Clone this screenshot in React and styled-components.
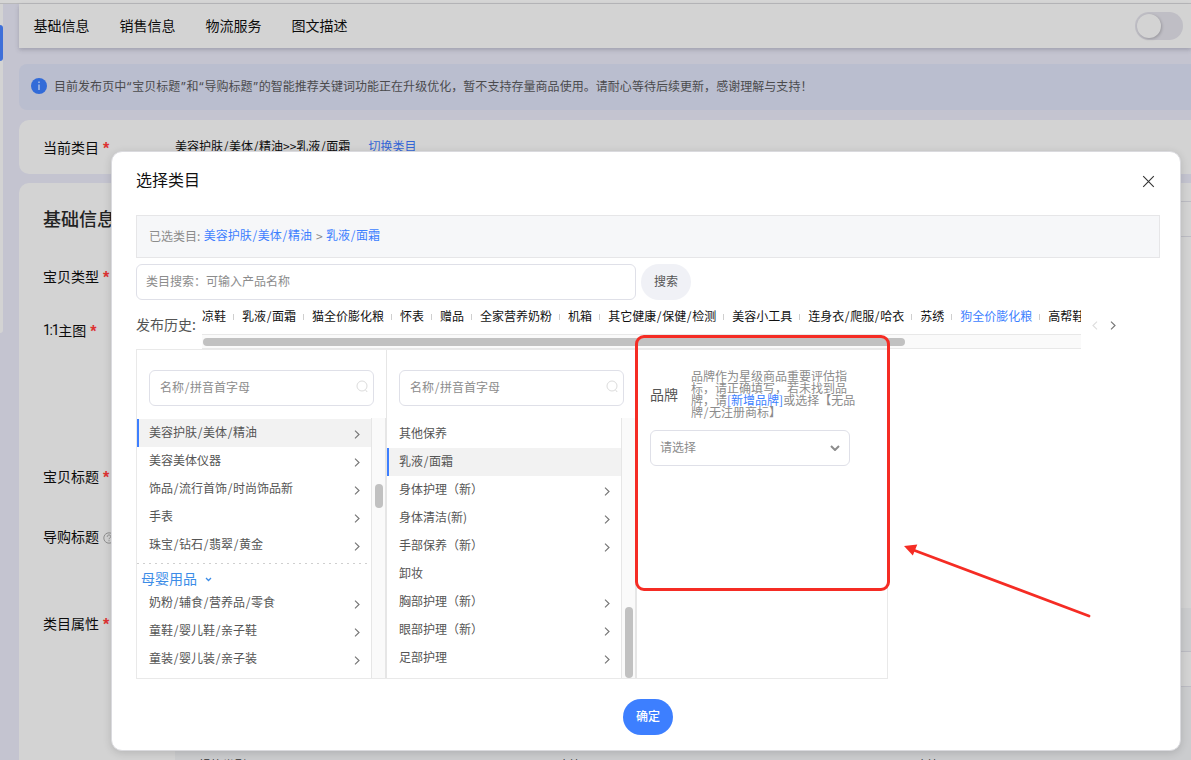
import { Fragment } from 'react';
import styled, { createGlobalStyle, css } from 'styled-components';

const color = {
  primary: '#3d7fff',
  group: '#3c8ce7',
  line: '#e6e6e8',
  field: '#dfe0e8',
  text: '#555555',
  hint: '#8c8c8c',
  page: '#c4c4d0',
  card: '#d3d3d3',
  mark: '#f52c24',
};

const GlobalStyle = createGlobalStyle`
  * {
    box-sizing: border-box;
  }
  body {
    margin: 0;
    overflow: hidden;
    font-family: 'Noto Sans CJK SC', sans-serif;
    font-size: 12px;
    line-height: 20px;
    white-space: nowrap;
  }
`;

// ---------- page behind the dialog ----------
const Page = styled.div`
  position: relative;
  width: 1191px;
  height: 760px;
  overflow: hidden;
  background: ${color.page};
`;
const TopStrip = styled.div`
  height: 4px;
  background: #d5d5d5;
  border-bottom: 1px solid #b8b8ba;
`;
const Columns = styled.div`
  display: flex;
  height: 756px;
`;
const Rail = styled.div`
  width: 3px;
  height: 329px;
  padding-top: 21px;
  margin-right: 16px;
  background: ${color.card};
  border-radius: 0 0 3px 0;
`;
const RailButton = styled.div`
  height: 36px;
  background: #3e6fd9;
  border-radius: 0 4px 4px 0;
`;
const Main = styled.div`
  flex: 1;
  display: flex;
  flex-direction: column;
`;
const Nav = styled.nav`
  display: flex;
  flex: none;
  gap: 30px;
  height: 44px;
  padding: 11px 8px 0 14.5px;
  background: ${color.card};
  box-shadow: 0 2px 4px rgba(60, 60, 80, 0.25);
  font-size: 14px;
  color: #0c0c0c;
`;
const Toggle = styled.div`
  width: 48px;
  height: 28px;
  padding: 2px;
  margin: -3px 0 0 auto;
  border-radius: 14px;
  background: #bfbec5;
  &::before {
    content: '';
    display: block;
    width: 24px;
    height: 24px;
    border-radius: 50%;
    background: #d3d3d3;
    box-shadow: 1px 1px 3px rgba(0, 0, 0, 0.2);
  }
`;
const Notice = styled.div`
  display: flex;
  flex: none;
  gap: 7px;
  height: 46px;
  margin-top: 16px;
  padding: 12px 0 0 12px;
  border-radius: 8px 0 0 8px;
  background: #babecf;
  color: #4b4b4d;
  letter-spacing: 0.04px;
  svg {
    margin-top: 2px;
  }
`;
const Card = styled.section`
  flex: none;
  height: ${({ $height }) => $height}px;
  margin-top: ${({ $gap }) => $gap}px;
  padding-left: 24px;
  border-radius: 10px 0 0 10px;
  background: ${color.card};
`;
const CardTitle = styled.div`
  display: flex;
  justify-content: space-between;
  height: 83px;
  h2 {
    margin: 23px 0 0;
    font-size: 18px;
    line-height: 24px;
    font-weight: 500;
    color: #222;
  }
`;
const TitleField = styled.div`
  width: 400px;
  height: 36px;
  margin-top: 18px;
  border: 1px solid #bcbcc3;
  border-right: none;
`;
const FormRow = styled.div`
  display: flex;
  height: ${({ $height }) => $height}px;
  padding-top: ${({ $top = 0 }) => $top}px;
`;
const FormLabel = styled.div`
  display: flex;
  width: 132px;
  font-size: 14px;
  color: #0c0c0c;
`;
const Required = styled.span`
  margin-left: 4px;
  color: #dd3232;
  font-family: 'Liberation Sans', sans-serif;
  font-size: 16px;
  font-weight: 700;
  line-height: 23px;
`;
const Ratio = styled.span`
  font-family: Roboto, sans-serif;
  letter-spacing: -1.3px;
`;
const CurrentPath = styled.span`
  margin-top: -1px;
  color: #0c0c0c;
`;
const SwitchLink = styled.a`
  margin: -1px 0 0 18px;
  color: #3366d6;
`;
const Attributes = styled.div`
  flex: 1;
  height: 160px;
  margin-top: -5px;
  padding-top: 43px;
  background: #cbccce;
`;
const AttributeField = styled.div`
  height: 36px;
  background: ${color.card};
  border: 1px solid #bcbcc3;
  border-width: 1px 0;
`;
const AttributeNames = styled.div`
  display: grid;
  grid-template-columns: 358px 358px 1fr;
  padding: 68px 0 0 14px;
  color: #333;
`;
const AttributeName = styled.div`
  display: flex;
  gap: 4px;
  i {
    color: #d33;
    font-style: normal;
  }
`;

// ---------- dialog ----------
const Dialog = styled.div`
  position: absolute;
  left: 111px;
  top: 151px;
  width: 1070px;
  height: 600px;
  padding: 0 20px 0 24px;
  border: 1px solid #dadade;
  border-radius: 11px;
  background: #fff;
  box-shadow: 0 2px 8px rgba(0, 0, 0, 0.14);
  display: flex;
  flex-direction: column;
`;
const DialogHead = styled.header`
  display: flex;
  justify-content: space-between;
  height: 63px;
  padding-top: 15px;
  font-size: 16px;
  line-height: 24px;
  color: #111;
  svg {
    margin: 8px 5px 0 0;
  }
`;
const Selected = styled.div`
  height: 43px;
  padding-left: 12px;
  border: 1px solid ${color.line};
  background: #f6f7f9;
  color: ${color.hint};
  line-height: 40px;
  display: flex;
  a {
    color: ${color.primary};
    margin: -1px 4px 0 3.5px;
  }
`;
const SearchBar = styled.div`
  display: flex;
  gap: 5px;
  margin-top: 6px;
`;
const Field = styled.div`
  display: flex;
  align-items: center;
  justify-content: space-between;
  width: ${({ $width }) => $width}px;
  height: 36px;
  padding: 0 ${({ $right = 9 }) => $right}px 2px ${({ $left = 9 }) => $left}px;
  border: 1px solid ${color.field};
  border-radius: 6px;
  color: ${color.hint};
`;
const Button = styled.button`
  width: 50px;
  height: 36px;
  padding: 0 0 2px;
  border: none;
  border-radius: 18px;
  font: inherit;
  background: #f0f1f6;
  color: ${color.text};
  ${({ $primary }) =>
    $primary &&
    css`
      background: ${color.primary};
      color: #fff;
      font-weight: 500;
    `}
`;
const History = styled.div`
  display: flex;
  height: 49px;
`;
const HistoryLabel = styled.div`
  width: 66px;
  padding-top: 14px;
  font-size: 14px;
  color: ${color.text};
`;
const HistoryScroll = styled.div`
  width: 879px;
  overflow: hidden;
`;
const HistoryItems = styled.div`
  display: flex;
  align-items: center;
  height: 34px;
  padding-bottom: 3px;
`;
const HistoryItem = styled.span`
  display: flex;
  flex: none;
  align-items: center;
  color: ${({ $active }) => ($active ? color.primary : '#111')};
  &:not(:first-child)::before {
    content: '';
    width: 1px;
    height: 6px;
    margin: 2px 8px 0 7px;
    background: #cfcfcf;
  }
`;
const TrackX = styled.div`
  height: 15px;
  padding: 3px 1px;
  border: 1px solid #e8e8e8;
  border-width: 1px 0;
  background: #fafafa;
  &::before {
    content: '';
    display: block;
    width: 702px;
    height: 8px;
    border-radius: 4px;
    background: #c1c1c1;
  }
`;
const HistoryArrows = styled.div`
  display: flex;
  gap: 12px;
  padding: 21px 0 0 11px;
`;
const Panels = styled.div`
  display: flex;
  width: 752px;
  height: 330px;
  border: 1px solid #e9e9e9;
`;
const Panel = styled.div`
  display: flex;
  flex-direction: column;
  width: 250px;
  padding-top: 20px;
  &:not(:last-child) {
    border-right: 1px solid #e6e6e6;
  }
  & > ${Field} {
    flex: none;
    margin-left: 12px;
  }
  &:last-child > ${Field} {
    margin-left: 13px;
  }
`;
const ListArea = styled.div`
  display: flex;
  height: 260px;
  margin-top: 12px;
`;
const List = styled.div`
  flex: 1;
  padding-top: ${({ $top }) => $top}px;
`;
const Item = styled.div`
  display: flex;
  justify-content: space-between;
  height: 28px;
  padding: 3px 11px 0 10px;
  border-left: 2px solid transparent;
  color: ${color.text};
  ${({ $active }) =>
    $active &&
    css`
      background: #f2f2f2;
      border-color: ${color.primary};
    `}
  svg {
    margin-top: 8px;
  }
`;
const Group = styled.div`
  display: flex;
  align-items: center;
  gap: 8px;
  height: 26px;
  margin-top: 4px;
  padding: 3px 0 0 4px;
  background: repeating-linear-gradient(90deg, #cfcfcf 0 2px, transparent 2px 6px) 0 0 / 100% 1px no-repeat;
  font-size: 14px;
  color: ${color.group};
  svg {
    margin-top: 3px;
  }
`;
const TrackY = styled.div`
  width: 15px;
  padding: ${({ $offset }) => $offset}px 2px 0 3px;
  border: 1px solid #e6e6e6;
  border-width: 0 1px;
  background: #fafafa;
  &::before {
    content: '';
    display: block;
    width: 8px;
    height: ${({ $size }) => $size}px;
    border-radius: 4px;
    background: #c1c1c1;
  }
`;
const Brand = styled.div`
  display: flex;
  align-items: center;
  gap: 13px;
  height: 48px;
  margin-bottom: 12px;
  padding: 0 0 1px 13px;
  color: ${color.text};
  font-size: 14px;
`;
const BrandTip = styled.p`
  margin: 0;
  font-size: 12px;
  line-height: 12px;
  color: ${color.hint};
  a {
    color: ${color.primary};
  }
`;
const Footer = styled.footer`
  display: flex;
  justify-content: center;
  padding-top: 20px;
`;

// ---------- annotation over the dialog ----------
const Frame = styled.div`
  position: absolute;
  left: 635px;
  top: 335px;
  width: 255px;
  height: 256px;
  border: 3px solid ${color.mark};
  border-radius: 9px;
`;
const Arrow = styled.svg`
  position: absolute;
  left: 900px;
  top: 540px;
`;

const Half = styled.span`
  display: inline-block;
  width: 0.5em;
  text-align: center;
  font-family: ${({ $latin }) => ($latin ? "'Noto Sans'" : 'inherit')}, sans-serif;
  line-height: 1;
`;

// slashes and curly quotes take half a character
const Text = ({ children }) =>
  children.split(/([/“”])/).map((part, i) =>
    /^[/“”]$/.test(part) ? (
      <Half key={i} $latin={part !== '/'}>
        {part}
      </Half>
    ) : (
      <Fragment key={i}>{part}</Fragment>
    )
  );

const Chevron = ({ stroke = '#757575', left }) => (
  <svg width="6" height="9" viewBox="0 0 6 9" fill="none" stroke={stroke} strokeWidth="1.15">
    <path d={left ? 'M5 0.7 1 4.5 5 8.3' : 'M1 0.7 5 4.5 1 8.3'} />
  </svg>
);

const SearchIcon = () => (
  <svg width="13" height="14" viewBox="0 0 13 14" fill="none" stroke="#dcdcdc" strokeWidth="1">
    <circle cx="6" cy="6" r="5" />
    <path d="M9.4 9.8 11.2 12" />
  </svg>
);

const history = [
  '凉鞋',
  '乳液/面霜',
  '猫全价膨化粮',
  '怀表',
  '赠品',
  '全家营养奶粉',
  '机箱',
  '其它健康/保健/检测',
  '美容小工具',
  '连身衣/爬服/哈衣',
  '苏绣',
  '狗全价膨化粮',
  '高帮鞋',
];
const beauty = ['美容护肤/美体/精油', '美容美体仪器', '饰品/流行首饰/时尚饰品新', '手表', '珠宝/钻石/翡翠/黄金'];
const baby = ['奶粉/辅食/营养品/零食', '童鞋/婴儿鞋/亲子鞋', '童装/婴儿装/亲子装'];
const care = [
  { name: '其他保养', leaf: true },
  { name: '乳液/面霜', leaf: true },
  { name: '身体护理（新）' },
  { name: '身体清洁(新)' },
  { name: '手部保养（新）' },
  { name: '卸妆', leaf: true },
  { name: '胸部护理（新）' },
  { name: '眼部护理（新）' },
  { name: '足部护理' },
];

const Category = ({ name, leaf, active }) => (
  <Item $active={active}>
    <span>
      <Text>{name}</Text>
    </span>
    {!leaf && <Chevron />}
  </Item>
);

const PanelSearch = () => (
  <Field $width={225} $left={10} $right={4}>
    <span>
      <Text>名称/拼音首字母</Text>
    </span>
    <SearchIcon />
  </Field>
);

const Background = () => (
  <>
    <TopStrip />
    <Columns>
      <Rail>
        <RailButton />
      </Rail>
      <Main>
        <Nav>
          <span>基础信息</span>
          <span>销售信息</span>
          <span>物流服务</span>
          <span>图文描述</span>
          <Toggle />
        </Nav>
        <Notice>
          <svg width="16" height="16" viewBox="0 0 16 16">
            <circle cx="8" cy="8" r="8" fill="#326bd8" />
            <path d="M8 6.5V12M8 3.6V5" stroke="#d5dcec" strokeWidth="1.1" />
          </svg>
          <span>
            <Text>
              目前发布页中“宝贝标题”和“导购标题”的智能推荐关键词功能正在升级优化，暂不支持存量商品使用。请耐心等待后续更新，感谢理解与支持！
            </Text>
          </span>
        </Notice>
        <Card $gap={10} $height={54}>
          <FormRow $height={54} $top={17}>
            <FormLabel>
              当前类目<Required>*</Required>
            </FormLabel>
            <CurrentPath>
              <Text>美容护肤/美体/精油&gt;&gt;乳液/面霜</Text>
            </CurrentPath>
            <SwitchLink>切换类目</SwitchLink>
          </FormRow>
        </Card>
        <Card $gap={9} $height={590}>
          <CardTitle>
            <h2>基础信息</h2>
            <TitleField />
          </CardTitle>
          <FormRow $height={54}>
            <FormLabel>
              宝贝类型<Required>*</Required>
            </FormLabel>
          </FormRow>
          <FormRow $height={146}>
            <FormLabel>
              <Ratio>1:1</Ratio>主图<Required>*</Required>
            </FormLabel>
          </FormRow>
          <FormRow $height={60}>
            <FormLabel>
              宝贝标题<Required>*</Required>
            </FormLabel>
          </FormRow>
          <FormRow $height={87}>
            <FormLabel>
              导购标题
              <svg width="16" height="20" viewBox="0 0 16 20" fill="none" stroke="#8f8f8f">
                <circle cx="10" cy="12" r="5.2" />
                <path d="M8.2 10.8C8.2 8.3 11.8 8.5 11.8 10.6 11.8 11.9 10 11.9 10 13.2M10 14.2V15.2" />
              </svg>
            </FormLabel>
          </FormRow>
          <FormRow $height={160}>
            <FormLabel>
              类目属性<Required>*</Required>
            </FormLabel>
            <Attributes>
              <AttributeField />
              <AttributeNames>
                {['规格类型', '功效', '功效'].map((name, i) => (
                  <AttributeName key={i}>
                    <i>*</i>
                    {name}
                  </AttributeName>
                ))}
              </AttributeNames>
            </Attributes>
          </FormRow>
        </Card>
      </Main>
    </Columns>
  </>
);

const App = () => (
  <Page>
    <GlobalStyle />
    <Background />
    <Dialog>
      <DialogHead>
        <span>选择类目</span>
        <svg width="13" height="13" viewBox="0 0 13 13" stroke="#333" strokeWidth="1.1">
          <path d="M1.2 1.2 11.8 11.8M11.8 1.2 1.2 11.8" />
        </svg>
      </DialogHead>
      <Selected>
        <span>已选类目:</span>
        <a>
          <Text>美容护肤/美体/精油</Text>
        </a>
        &gt;
        <a>
          <Text>乳液/面霜</Text>
        </a>
      </Selected>
      <SearchBar>
        <Field $width={500}>类目搜索：可输入产品名称</Field>
        <Button>搜索</Button>
      </SearchBar>
      <History>
        <HistoryLabel>发布历史:</HistoryLabel>
        <HistoryScroll>
          <HistoryItems>
            {history.map((name) => (
              <HistoryItem key={name} $active={name === '狗全价膨化粮'}>
                <span>
                  <Text>{name}</Text>
                </span>
              </HistoryItem>
            ))}
          </HistoryItems>
          <TrackX />
        </HistoryScroll>
        <HistoryArrows>
          <Chevron left stroke="#dedede" />
          <Chevron />
        </HistoryArrows>
      </History>
      <Panels>
        <Panel>
          <PanelSearch />
          <ListArea>
            <List $top={1}>
              {beauty.map((name, i) => (
                <Category key={name} name={name} active={i === 0} />
              ))}
              <Group>
                母婴用品
                <svg width="7" height="5" viewBox="0 0 7 5" fill="none" stroke={color.group} strokeWidth="1.3">
                  <path d="M1 1 3.5 3.5 6 1" />
                </svg>
              </Group>
              {baby.map((name) => (
                <Category key={name} name={name} />
              ))}
            </List>
            <TrackY $offset={66} $size={24} />
          </ListArea>
        </Panel>
        <Panel>
          <PanelSearch />
          <ListArea>
            <List $top={2}>
              {care.map(({ name, leaf }, i) => (
                <Category key={name} name={name} leaf={leaf} active={i === 1} />
              ))}
            </List>
            <TrackY $offset={189} $size={71} />
          </ListArea>
        </Panel>
        <Panel>
          <Brand>
            品牌
            <BrandTip>
              品牌作为星级商品重要评估指
              <br />
              标，请正确填写，若未找到品
              <br />
              牌，请<a>[新增品牌]</a>或选择【无品
              <br />
              <Text>牌/无注册商标】</Text>
            </BrandTip>
          </Brand>
          <Field $width={200}>
            请选择
            <svg width="10" height="7" viewBox="0 -1 10 7" fill="none" stroke="#8c8c8c" strokeWidth="2">
              <path d="M1 1 5 5 9 1" />
            </svg>
          </Field>
        </Panel>
      </Panels>
      <Footer>
        <Button $primary>确定</Button>
      </Footer>
    </Dialog>
    <Frame />
    <Arrow width="196" height="82" viewBox="0 0 196 82">
      <path d="M12 9.5 189 76" stroke={color.mark} strokeWidth="2.8" strokeLinecap="round" />
      <path d="M4 6 17.3 4.6 12.8 15.4Z" fill={color.mark} />
    </Arrow>
  </Page>
);

export default App;
